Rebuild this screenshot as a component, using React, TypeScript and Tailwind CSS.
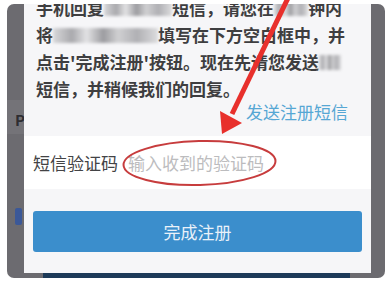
import React from 'react';

const Blur = ({ w }: { w: number }) => (
  <span
    className="inline-block h-[15px] align-[-1px] blur-[1.5px] bg-[linear-gradient(90deg,#d8d8da,#a9a9ad_18%,#e2e2e4_32%,#9c9ca0_48%,#d0d0d2_62%,#b0b0b4_80%,#dcdcde)]"
    style={{ width: w }}
  />
);

const App: React.FC = () => {
  return (
    <div
      className="relative w-[391px] h-[281px] overflow-hidden bg-white pl-[7px] pr-[6px] pt-[4px] pb-[3px]"
      style={{ fontFamily: '"Noto Sans CJK SC", "Noto Sans", sans-serif' }}
    >
      {/* phone screen under dim overlay */}
      <div className="flex h-full flex-col overflow-hidden rounded-[7px] bg-[#6c6b70]">
        <div className="flex flex-1 min-h-0">
          {/* left strip */}
          <div className="flex w-[17px] flex-col pl-[8px]">
            <div className="h-[96px]" />
            <div className="h-[34px] bg-[#747378] -ml-[8px]" />
            <span className="-mt-[22px] text-[15px] font-bold leading-[16px] text-[#2e2d31]">P</span>
            <div className="mt-[80px] h-[17px] w-[7px] rounded-[2px] bg-[#3b5898]" />
          </div>

          {/* dialog */}
          <div className="flex w-[347px] flex-col overflow-hidden bg-[#f6f6f8]">
            <div className="flex flex-col px-[12px] pb-[14px] text-[17px] text-[#3e3e40] font-bold">
              <div className="-mt-[10px] flex flex-col leading-[27px] whitespace-nowrap">
                <div>
                  手机回复<Blur w={68} />短信，请您在<Blur w={34} />钟内
                </div>
                <div>
                  将<Blur w={105} />填写在下方空白框中，并
                </div>
                <div>
                  点击'完成注册'按钮。现在先请您发送<Blur w={22} />
                </div>
                <div>短信，并稍候我们的回复。</div>
              </div>
              <div className="self-end pr-[11px] text-[17px] font-normal leading-[20px] text-[#56a7d4]">
                发送注册短信
              </div>
            </div>

            <div className="flex h-[53px] items-center gap-[10px] bg-white px-[9px] text-[17px]">
              <span className="text-[#434345]">短信验证码</span>
              <span className="text-[#bcbcbe]">输入收到的验证码</span>
            </div>

            <div className="flex flex-1 flex-col px-[9px] pt-[22px]">
              <button className="flex h-[41px] items-center justify-center rounded-[3px] bg-[#3b8ecc] text-[17px] text-[#e9f1f9]">
                完成注册
              </button>
            </div>
          </div>

          {/* right strip */}
          <div className="w-[14px]" />
        </div>
        <div className="flex h-[5px]">
          <div className="ml-[36px] w-[307px] bg-[#1d3a58]" />
        </div>
      </div>

      {/* annotation: red arrow and ellipse */}
      <svg className="pointer-events-none absolute left-0 top-0" width="391" height="281" viewBox="0 0 391 281">
        <ellipse
          cx="199.5"
          cy="163"
          rx="76"
          ry="22"
          fill="none"
          stroke="#c73c3d"
          strokeWidth="2"
          transform="rotate(-1.5 199.5 163)"
        />
        <line x1="289" y1="-4" x2="232" y2="114" stroke="#e8302c" strokeWidth="5" />
        <polygon points="222,134 220,111 242,123" fill="#e8302c" />
      </svg>
    </div>
  );
};

export default App;
